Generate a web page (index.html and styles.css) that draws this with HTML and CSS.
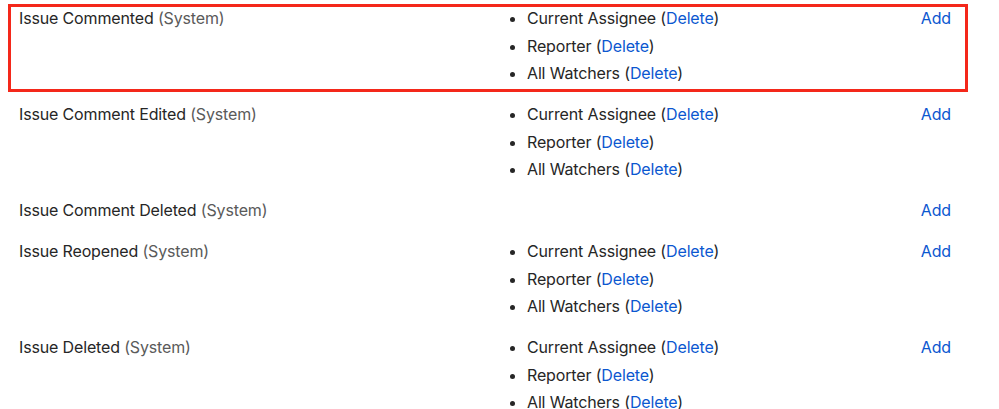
FILE: index.html
```html
<!DOCTYPE html>
<html>
<head>
<meta charset="utf-8">
<link rel="stylesheet" href="styles.css">
</head>
<body>
<div class="table">
  <div class="row">
    <div class="event">Issue Commented <span class="sys">(System)</span></div>
    <ul class="list">
      <li>Current Assignee (<a href="#">Delete</a>)</li>
      <li>Reporter (<a href="#">Delete</a>)</li>
      <li>All Watchers (<a href="#">Delete</a>)</li>
    </ul>
    <div class="ops"><a href="#">Add</a></div>
  </div>
  <div class="row">
    <div class="event">Issue Comment Edited <span class="sys">(System)</span></div>
    <ul class="list">
      <li>Current Assignee (<a href="#">Delete</a>)</li>
      <li>Reporter (<a href="#">Delete</a>)</li>
      <li>All Watchers (<a href="#">Delete</a>)</li>
    </ul>
    <div class="ops"><a href="#">Add</a></div>
  </div>
  <div class="row">
    <div class="event">Issue Comment Deleted <span class="sys">(System)</span></div>
    <ul class="list"></ul>
    <div class="ops"><a href="#">Add</a></div>
  </div>
  <div class="row">
    <div class="event">Issue Reopened <span class="sys">(System)</span></div>
    <ul class="list">
      <li>Current Assignee (<a href="#">Delete</a>)</li>
      <li>Reporter (<a href="#">Delete</a>)</li>
      <li>All Watchers (<a href="#">Delete</a>)</li>
    </ul>
    <div class="ops"><a href="#">Add</a></div>
  </div>
  <div class="row">
    <div class="event">Issue Deleted <span class="sys">(System)</span></div>
    <ul class="list">
      <li>Current Assignee (<a href="#">Delete</a>)</li>
      <li>Reporter (<a href="#">Delete</a>)</li>
      <li>All Watchers (<a href="#">Delete</a>)</li>
    </ul>
    <div class="ops"><a href="#">Add</a></div>
  </div>
  <div class="highlight"></div>
</div>
</body>
</html>
```
FILE: styles.css
```css
html, body {
  margin: 0;
  padding: 0;
  background: #ffffff;
  overflow: hidden;
}
body {
  font-family: Inter, "Liberation Sans", sans-serif;
  font-size: 16px;
  letter-spacing: -0.15px;
  color: #262626;
}
.table {
  position: relative;
  padding-top: 5px;
}
.row {
  display: grid;
  grid-template-columns: 494px 1fr auto;
  padding: 0 48px 13.5px 19px;
  line-height: 27.5px;
}
.event {
  color: #262626;
}
.sys {
  color: #5a5a5a;
}
.list {
  margin: 0;
  padding: 0 0 0 14px;
  list-style: disc;
  min-height: 27.5px;
}
a {
  color: #0b57d0;
  text-decoration: none;
}
.ops {
  text-align: right;
}
.highlight {
  position: absolute;
  left: 8px;
  top: 4px;
  width: 960px;
  height: 88px;
  box-sizing: border-box;
  border: 3.5px solid #f4281a;
  pointer-events: none;
}
```
